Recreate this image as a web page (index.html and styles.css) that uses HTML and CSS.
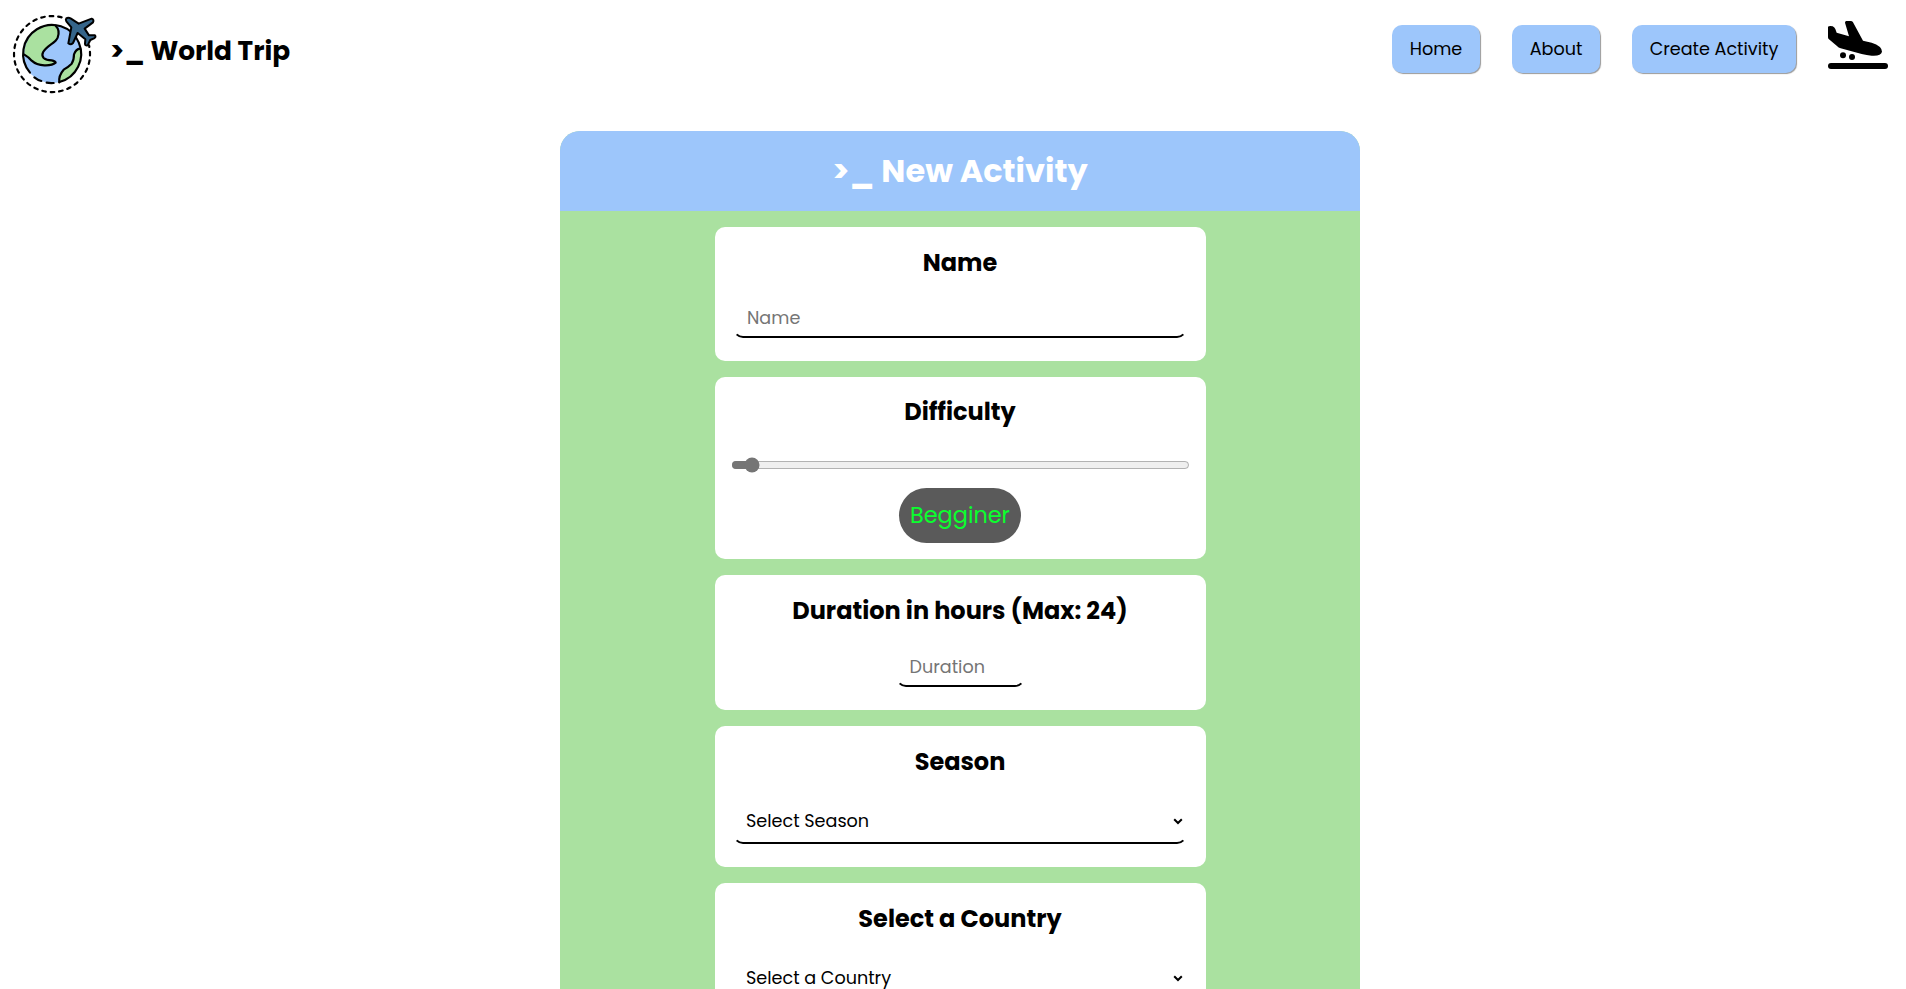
FILE: index.html
```
<!DOCTYPE html>
<html lang="en">
<head>
<meta charset="utf-8">
<title>World Trip</title>
<link rel="stylesheet" href="styles.css">
</head>
<body>
<header class="topbar">
  <svg class="logo" viewBox="0 0 300 285" aria-hidden="true">
    <circle cx="141" cy="147" r="87" fill="#9dc6fb"/>
    <path d="M58 149A84 86 0 0 1 152 62Q166 76 158 98Q154 108 138 118Q102 144 116 159Q124 166 140 166Q151 168 152 173Q142 182 118 181Q94 180 80 167Q70 156 58 149Z" fill="#aae1a0"/>
    <path d="M227 131Q213 132 207 148Q207 166 200 176Q190 186 176 194Q160 212 163 232A88 88 0 0 0 227 131Z" fill="#aae1a0"/>
    <g fill="none" stroke="#000" stroke-width="6.500" stroke-linecap="round" stroke-linejoin="round">
      <path d="M152 62Q166 76 158 98Q154 108 138 118Q102 144 116 159Q124 166 140 166Q151 168 152 173Q142 182 118 181Q94 180 80 167Q70 156 58 149M225 131Q213 132 207 148Q207 166 200 176Q190 186 176 194Q160 212 163 232"/>
      <path d="M75 203A87 87 0 1 1 163 231M88 217Q98 225 109 228M125 233Q135 235 146 234"/>
      <path d="M170 37A114 114 0 1 0 252 121" stroke-dasharray="11 14.500"/>
    </g>
    <path d="M184 40Q190 36 198 41L221 56L260 41Q268 44 264 52L239 71L252 91L270 91Q274 96 267 100L256 105L248 121Q240 123 240 116L241 103L218 84L204 114Q197 121 190 115L199 67L184 49Q181 44 184 40Z" fill="#35658a" stroke="#000" stroke-width="6" stroke-linejoin="round"/>
  </svg>
  <h1 class="brand">&gt;_ World Trip</h1>
  <nav class="nav">
    <a class="btn home">Home</a>
    <a class="btn about">About</a>
    <a class="btn create">Create Activity</a>
    <svg class="plane" viewBox="54 33 180 144" aria-hidden="true">
      <path d="M54 50Q58 47 68 49Q74 52 76 57L80 68L117 79L105 38Q105 33 109 33L122 33Q127 33 129 37L159 92L185 98Q216 108 216 125Q213 139 185 137Q170 136 155 132L92 115Q86 113 80 107L56 87Q54 85 54 81Z"/>
      <circle cx="99" cy="136" r="9"/><circle cx="126" cy="141" r="9"/>
      <rect x="54" y="159" width="180" height="18" rx="9"/>
    </svg>
  </nav>
</header>
<main class="panel">
  <h2 class="panel-title">&gt;_ New Activity</h2>
  <form class="cards">
    <section class="card name">
      <h3>Name</h3>
      <input class="field" type="text" placeholder="Name">
    </section>
    <section class="card difficulty">
      <h3>Difficulty</h3>
      <input class="range" type="range" min="0" max="100" value="3">
      <p class="pill">Begginer</p>
    </section>
    <section class="card duration">
      <h3>Duration in hours (Max: 24)</h3>
      <input class="field short" type="text" placeholder="Duration">
    </section>
    <section class="card season">
      <h3>Season</h3>
      <div class="field select"><span>Select Season</span><svg class="chevron" viewBox="0 0 10 7"><path d="M1.200 1.200L5 5L8.800 1.200"/></svg></div>
    </section>
    <section class="card country">
      <h3>Select a Country</h3>
      <div class="field select"><span>Select a Country</span><svg class="chevron" viewBox="0 0 10 7"><path d="M1.200 1.200L5 5L8.800 1.200"/></svg></div>
    </section>
  </form>
</main>
</body>
</html>
```
FILE: styles.css
```
* { box-sizing: border-box; margin: 0; padding: 0; }
html, body { height: 100%; overflow: hidden; }
body { display: flex; flex-direction: column; background: #fff; color: #000; font-family: Poppins, Inter, sans-serif; }

.topbar { display: flex; flex: none; align-items: flex-start; height: 131px; padding: 5px 18px 0 5px; }
.logo { width: 100px; height: 95px; }
.brand { margin-left: 5px; padding-top: 30px; font-size: 26.4px; line-height: 32px; font-weight: 700; }
.nav { display: flex; margin-left: auto; padding-top: 20px; }
.btn {
  height: 48px; margin-right: 32px; border-radius: 10px;
  background: #9dc6fb; box-shadow: 1px 1px 1px rgba(0, 0, 0, .4);
  font-size: 17.6px; line-height: 48px; text-align: center; white-space: nowrap;
}
.home, .about { width: 88px; }
.create { width: 164px; }
.plane { width: 60px; height: 48px; margin-top: -4px; }

.panel { flex: 1; width: 800px; min-height: 0; overflow: hidden; margin: 0 0 0 560px; border-radius: 20px 20px 0 0; background: #aae1a0; }
.panel-title { height: 80px; background: #9dc6fb; color: #fff; font-size: 32px; line-height: 80px; text-align: center; }
.cards { display: flex; flex-direction: column; align-items: center; gap: 16px; padding-top: 16px; }
.card { display: flex; flex-direction: column; align-items: center; width: 491px; border-radius: 10px; background: #fff; }
.name { height: 134px; }
.difficulty { height: 182px; }
.duration { height: 135px; }
.season { height: 141px; }
.country { height: 141px; }
.card h3 { margin-top: 18px; font-size: 24px; line-height: 36px; font-weight: 700; white-space: nowrap; }
.card.difficulty h3 { margin-top: 17px; }
.field { flex: none; width: 454px; height: 40px; margin-top: 18px; padding: 0 12px; border: 2px solid transparent; border-bottom-color: #000; border-radius: 10px; background: none; font-family: inherit; font-size: 17.6px; }
.field::placeholder { color: #757575; }
.name .field { margin-top: 17px; }
.field.short { width: 129px; }
.select { display: flex; justify-content: space-between; align-items: center; height: 46px; padding: 0 2.500px 0 11px; }
.range { width: 459px; height: 16px; margin-top: 27px; accent-color: #757575; }
.pill { height: 55px; width: 122px; margin-top: 15px; border-radius: 28px; background: #5a5a5a; color: #0aff2e; font-size: 22.4px; line-height: 55px; text-align: center; }
.chevron { width: 10px; height: 7px; fill: none; stroke: #000; stroke-width: 2; }
```
